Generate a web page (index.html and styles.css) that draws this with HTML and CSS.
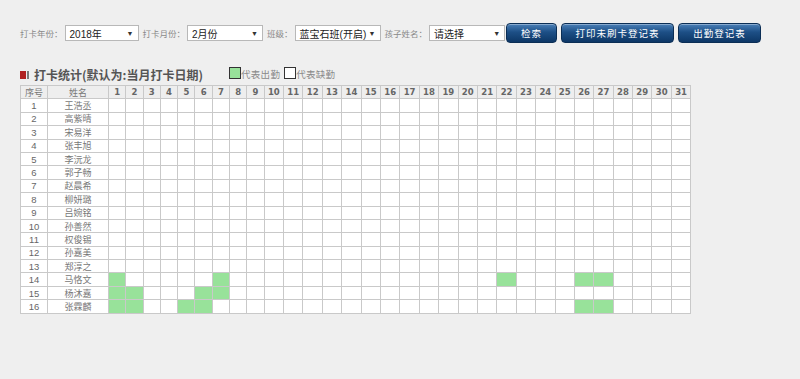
FILE: index.html
```html
<!DOCTYPE html>
<html lang="zh-CN">
<head>
    <meta charset="UTF-8">
    <meta name="viewport" content="width=device-width, initial-scale=1.0">
    <title>打卡统计</title>
    <link rel="stylesheet" href="styles.css">
</head>
<body>

<div class="page">
    <div class="toolbar">
        <span class="lbl">打卡年份：</span>
        <div class="sel sel-year"><span>2018年</span><i>▼</i></div>
        <span class="lbl">打卡月份：</span>
        <div class="sel sel-month"><span>2月份</span><i>▼</i></div>
        <span class="lbl">班级：</span>
        <div class="sel sel-class"><span>蓝宝石班(开启)</span><i>▼</i></div>
        <span class="lbl">孩子姓名：</span>
        <div class="sel sel-child"><span>请选择</span><i>▼</i></div>
        <button class="btn btn-search">检索</button>
        <button class="btn btn-print">打印未刷卡登记表</button>
        <button class="btn btn-sheet">出勤登记表</button>
    </div>

    <div class="title-row">
        <span class="title-icon"><b></b><s></s></span>
        <h2 class="title">打卡统计(默认为:当月打卡日期)</h2>
        <span class="legend legend-on"><span class="box box-on"></span>代表出勤</span>
        <span class="legend"><span class="box box-off"></span>代表缺勤</span>
    </div>

    <table class="stats" id="stats">
        <colgroup id="cols">
            <col class="c-seq">
            <col class="c-name">
        </colgroup>
        <thead>
            <tr id="head-row">
                <th>序号</th>
                <th>姓名</th>
            </tr>
        </thead>
        <tbody id="rows"></tbody>
    </table>
</div>

<script>
    const names = ['王浩丞', '高紫晴', '宋易洋', '张丰旭', '李沅龙', '郭子畅', '赵晨希', '柳妍璐',
        '吕婉铭', '孙善然', '权俊锡', '孙嘉美', '郑淳之', '马恪文', '杨沐嘉', '张霖麟'];

    // days with a swipe record, by row number
    const present = {
        14: [1, 7, 22, 26, 27],
        15: [1, 2, 6, 7],
        16: [1, 2, 5, 6, 26, 27]
    };

    const cols = document.getElementById('cols');
    const headRow = document.getElementById('head-row');
    const body = document.getElementById('rows');

    for (let d = 1; d <= 31; d++) {
        const col = document.createElement('col');
        col.className = d < 10 ? 'c-day' : 'c-day2';
        cols.appendChild(col);

        const th = document.createElement('th');
        th.className = 'day';
        th.textContent = d;
        headRow.appendChild(th);
    }

    names.forEach(function (name, i) {
        const n = i + 1;
        const tr = document.createElement('tr');
        let html = '<td>' + n + '</td><td class="name">' + name + '</td>';
        const days = present[n] || [];
        for (let d = 1; d <= 31; d++) {
            html += days.indexOf(d) >= 0 ? '<td class="on"></td>' : '<td></td>';
        }
        tr.innerHTML = html;
        body.appendChild(tr);
    });
</script>

</body>
</html>
```

FILE: styles.css
```css
body {
    margin: 0;
    padding: 0;
    background: #efefef;
    font-family: "Liberation Sans", "Noto Sans CJK SC", sans-serif;
    color: #555;
}
.page {
    padding: 23px 0 0 20px;
}
.toolbar {
    display: flex;
    align-items: center;
    height: 20px;
}
.lbl {
    font-size: 8.5px;
    color: #8a8a8a;
    margin: 0 2px 0 4px;
}
.lbl:first-child {
    margin-left: 0;
}
.sel {
    display: flex;
    align-items: center;
    justify-content: space-between;
    box-sizing: border-box;
    height: 16px;
    padding: 0 4px 0 4px;
    background: #fff;
    border: 1px solid #b8b8b8;
    font-size: 10px;
    color: #222;
}
.sel i {
    font-style: normal;
    font-size: 7px;
    color: #333;
}
.sel-year { width: 74px; }
.sel-month { width: 76px; }
.sel-class { width: 86px; }
.sel-child { width: 76px; }
.btn {
    box-sizing: border-box;
    height: 20px;
    margin-left: 4px;
    padding: 0;
    border: 1px solid #0b2e55;
    border-radius: 4px;
    background: linear-gradient(#4a80b8, #1d4f86 45%, #0d3766);
    box-shadow: inset 0 1px 0 rgba(255, 255, 255, 0.35);
    color: #fff;
    font-family: "Noto Sans CJK SC", sans-serif;
    font-size: 9.5px;
    letter-spacing: 1px;
}
.btn-search {
    width: 51px;
    margin-left: 1px;
}
.btn-print { width: 113px; }
.btn-sheet { width: 83px; }

.title-row {
    display: flex;
    align-items: center;
    height: 20px;
    margin-top: 21px;
}
.title-icon {
    display: flex;
    align-items: center;
    gap: 1px;
    margin-top: 2px;
}
.title-icon b {
    width: 6px;
    height: 8px;
    background: #b02020;
}
.title-icon s {
    width: 2px;
    height: 8px;
    background: #7a7a7a;
}
.title {
    margin: 0 0 0 5px;
    font-family: "Noto Sans CJK SC", sans-serif;
    font-size: 12px;
    font-weight: 700;
    color: #555;
}
.legend {
    display: flex;
    align-items: center;
    font-family: "Noto Sans CJK SC", sans-serif;
    font-size: 9.5px;
    letter-spacing: 0.3px;
    color: #8a8a8a;
    margin-left: 4px;
}
.legend-on {
    margin-left: 26px;
}
.box {
    box-sizing: border-box;
    width: 12px;
    height: 12px;
    border: 1px solid #333;
    margin-top: -3px;
}
.box-on {
    background: #98e29a;
}
.box-off {
    background: #fff;
}

.stats {
    border-collapse: collapse;
    table-layout: fixed;
    width: 671px;
    margin-top: 1px;
    background: #fff;
    font-size: 9.5px;
    color: #666;
}
.c-seq { width: 27px; }
.c-name { width: 61px; }
.c-day { width: 17.3px; }
.c-day2 { width: 19.4px; }
.stats th, .stats td {
    border: 1px solid #c9c9c9;
    padding: 0;
    height: 12.4px;
    line-height: 11px;
    text-align: center;
    overflow: hidden;
    white-space: nowrap;
}
.stats th {
    background: #eeeeee;
    font-family: "Noto Sans CJK SC", sans-serif;
    font-weight: normal;
    font-size: 9px;
    color: #777;
}
.stats th.day {
    font-family: "DejaVu Sans", sans-serif;
    font-weight: bold;
    font-size: 8.5px;
    color: #666;
}
.stats td.name {
    font-family: "Noto Sans CJK SC", sans-serif;
    font-size: 9px;
    color: #777;
}
.stats td.on {
    background: #98e29a;
}
```
